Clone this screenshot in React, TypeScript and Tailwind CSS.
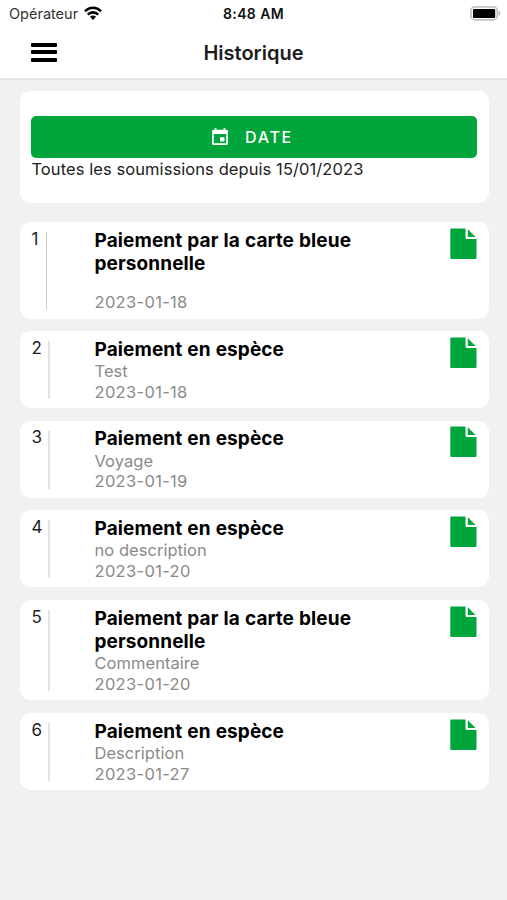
import React from 'react';

type Entry = {
  id: number;
  title: string[];
  note: string;
  date: string;
  box: string;
  rule: string;
};

const singleLine = 'h-[77px] mb-[12.6px] pt-[6.5px]';
const thickRule = 'left-[28px] w-[2px] bg-[#e3e3e3]';

const entries: Entry[] = [
  { id: 1, title: ['Paiement par la carte bleue', 'personnelle'], note: '', date: '2023-01-18', box: 'h-[97px] mb-[12.6px] pt-[7.2px]', rule: 'left-[26px] w-px bg-[#cfcfcf]' },
  { id: 2, title: ['Paiement en espèce'], note: 'Test', date: '2023-01-18', box: singleLine, rule: thickRule },
  { id: 3, title: ['Paiement en espèce'], note: 'Voyage', date: '2023-01-19', box: singleLine, rule: thickRule },
  { id: 4, title: ['Paiement en espèce'], note: 'no description', date: '2023-01-20', box: singleLine, rule: thickRule },
  { id: 5, title: ['Paiement par la carte bleue', 'personnelle'], note: 'Commentaire', date: '2023-01-20', box: 'h-[100.4px] mb-[12.6px] pt-[6.5px]', rule: thickRule },
  { id: 6, title: ['Paiement en espèce'], note: 'Description', date: '2023-01-27', box: 'h-[77px] pt-[6.5px]', rule: thickRule },
];

function WifiIcon() {
  return (
    <svg className="mb-[2px] ml-[6px] h-[14px] w-[18px]" viewBox="0 0 19 14" preserveAspectRatio="none" fill="none" stroke="#000" strokeWidth="2.6">
      <path d="M1 5.2a12.2 12.2 0 0 1 17 0" />
      <path d="M4 8.6a7.8 7.8 0 0 1 11 0" />
      <path d="M9.5 14 6.3 10.8a4.5 4.5 0 0 1 6.4 0z" fill="#000" stroke="none" />
    </svg>
  );
}

function BatteryIcon() {
  return (
    <svg className="mb-[1px] h-[15px] w-[31px]" viewBox="0 0 31 15">
      <rect x="0.9" y="0.9" width="26.4" height="13" rx="4" fill="#fff" stroke="#c4c4c4" strokeWidth="1.8" />
      <rect x="3" y="2.9" width="22.2" height="9.2" rx="1.2" fill="#000" />
      <path d="M28.6 5c2.4.7 2.4 4 0 4.7z" fill="#b5b5b5" />
    </svg>
  );
}

function FileIcon() {
  return (
    <svg className="-mt-px h-[32px] w-[27px] shrink-0" viewBox="0 0 27 32" fill="#00a63b">
      <path d="M1 0.5H15.5V9.5a1.5 1.5 0 0 0 1.5 1.5H26.5V30a1 1 0 0 1-1 1H1.3a1 1 0 0 1-1-1V1.5a1 1 0 0 1 .7-1z" />
      <path d="M17.8 1.2 25.5 8.9H18.3a.5.5 0 0 1-.5-.5z" />
    </svg>
  );
}

function HistoryCard({ entry }: { entry: Entry }) {
  return (
    <article className={`relative flex rounded-[11px] bg-white px-3 ${entry.box}`}>
      <span className={`absolute top-[10px] bottom-[9px] ${entry.rule}`} />
      <span className="w-[63px] shrink-0 text-[17px] leading-[21px] text-[#222]">{entry.id}</span>
      <div className="min-w-0 flex-1">
        <h2 className="text-[19px] font-bold leading-[23.3px] tracking-[0.1px] text-black [word-spacing:0.4px]">
          {entry.title.map((line) => (
            <span key={line} className="block whitespace-nowrap">{line}</span>
          ))}
        </h2>
        {entry.note ? (
          <p className="text-[16.5px] leading-[20.8px] tracking-[0.04px] text-[#8a8a8a]">{entry.note}</p>
        ) : (
          <div className="h-[16.3px]" />
        )}
        <p className="text-[16.5px] leading-[21px] tracking-[0.32px] text-[#8a8a8a]">{entry.date}</p>
      </div>
      <FileIcon />
    </article>
  );
}

export default function App() {
  return (
    <div className="h-[900px] w-[507px] overflow-hidden bg-[#f1f1f1] font-['Inter','Liberation_Sans',sans-serif]">
      <header className="h-[80px] border-b-2 border-[#e4e4e4] bg-white">
        <div className="grid h-[27px] grid-cols-3 items-center">
          <div className="flex items-center pl-[9px] text-[14.5px] leading-[27px] text-[#333]">
            <span>Opérateur</span>
            <WifiIcon />
          </div>
          <span className="text-center text-[14px] font-semibold leading-[27px] tracking-[0.4px] text-[#111]">8:48 AM</span>
          <div className="flex justify-end pr-[6px]"><BatteryIcon /></div>
        </div>
        <div className="grid h-[51px] grid-cols-3 items-center">
          <div className="mb-[2px] flex w-[57px] flex-col gap-[3.5px] pl-[31px]">
            <span className="h-[4px] rounded-[1px] bg-black" />
            <span className="h-[4px] rounded-[1px] bg-black" />
            <span className="h-[4px] rounded-[1px] bg-black" />
          </div>
          <h1 className="text-center text-[20px] font-semibold leading-[52px] text-[#1c1c1e]">Historique</h1>
        </div>
      </header>

      <main className="pl-[19.5px] pr-[18.5px] pt-[11px]">
        <section className="mb-[18.4px] h-[112.3px] rounded-[11px] bg-white px-[11.5px] pt-[24.7px]">
          <button className="flex h-[42.5px] w-full items-center justify-center rounded-[5px] bg-[#00a63b] pr-[3px] text-white">
            <svg className="mr-[17px] h-[17px] w-[16px]" viewBox="3 1 18 20" preserveAspectRatio="none" fill="currentColor">
              <path d="M17 12h-5v5h5v-5zM16 1v2H8V1H6v2H5c-1.11 0-1.99.9-1.99 2L3 19c0 1.1.89 2 2 2h14c1.1 0 2-.9 2-2V5c0-1.1-.9-2-2-2h-1V1h-2zm3 18H5V8h14v11z" />
            </svg>
            <span className="text-[16px] font-medium tracking-[1.7px]">DATE</span>
          </button>
          <p className="whitespace-nowrap pt-[0.4px] pl-[0.4px] text-[16.5px] leading-[21px] tracking-[0.08px] text-[#222]">Toutes les soumissions depuis 15/01/2023</p>
        </section>
        {entries.map((entry) => <HistoryCard key={entry.id} entry={entry} />)}
      </main>
    </div>
  );
}
